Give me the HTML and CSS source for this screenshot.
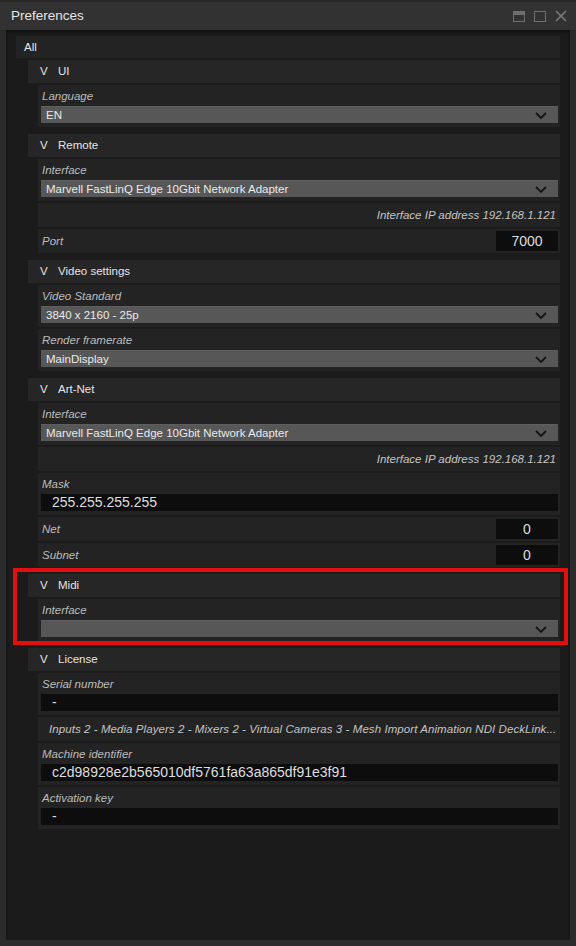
FILE: index.html
```html
<!DOCTYPE html>
<html>
<head>
<meta charset="utf-8">
<link rel="stylesheet" href="styles.css">
</head>
<body>
<div class="window">
  <div class="titlebar">
    <span class="title">Preferences</span>
    <div class="controls">
      <svg width="12" height="11" viewBox="0 0 12 11"><rect x="0.5" y="0.5" width="11" height="10" fill="none" stroke="#6f6f6f"/><rect x="1" y="1" width="10" height="3" fill="#6f6f6f"/></svg>
      <svg width="12" height="11" viewBox="0 0 12 11"><rect x="0.5" y="0.5" width="11" height="10" fill="none" stroke="#6f6f6f"/></svg>
      <svg width="12" height="12" viewBox="0 0 12 12"><path d="M1 1 L11 11 M11 1 L1 11" stroke="#7a7a7a" stroke-width="1.6"/></svg>
    </div>
  </div>
  <div class="body">
    <div class="all">All</div>
    <div class="sections">
      <section class="section">
        <div class="sec-head"><span class="chev">V</span>UI</div>
        <div class="block">
          <div class="label">Language</div>
          <div class="dropdown"><span>EN</span><svg class="arrow" width="12" height="7" viewBox="0 0 12 7"><path d="M1 1 L6 6 L11 1" fill="none" stroke="#141414" stroke-width="1.8"/></svg></div>
        </div>
      </section>

      <section class="section">
        <div class="sec-head"><span class="chev">V</span>Remote</div>
        <div class="block">
          <div class="label">Interface</div>
          <div class="dropdown"><span>Marvell FastLinQ Edge 10Gbit Network Adapter</span><svg class="arrow" width="12" height="7" viewBox="0 0 12 7"><path d="M1 1 L6 6 L11 1" fill="none" stroke="#141414" stroke-width="1.8"/></svg></div>
        </div>
        <div class="row info">Interface IP address 192.168.1.121</div>
        <div class="row field">
          <span class="label">Port</span>
          <span class="num">7000</span>
        </div>
      </section>

      <section class="section">
        <div class="sec-head"><span class="chev">V</span>Video settings</div>
        <div class="block">
          <div class="label">Video Standard</div>
          <div class="dropdown"><span>3840 x 2160 - 25p</span><svg class="arrow" width="12" height="7" viewBox="0 0 12 7"><path d="M1 1 L6 6 L11 1" fill="none" stroke="#141414" stroke-width="1.8"/></svg></div>
        </div>
        <div class="block">
          <div class="label">Render framerate</div>
          <div class="dropdown"><span>MainDisplay</span><svg class="arrow" width="12" height="7" viewBox="0 0 12 7"><path d="M1 1 L6 6 L11 1" fill="none" stroke="#141414" stroke-width="1.8"/></svg></div>
        </div>
      </section>

      <section class="section">
        <div class="sec-head"><span class="chev">V</span>Art-Net</div>
        <div class="block">
          <div class="label">Interface</div>
          <div class="dropdown"><span>Marvell FastLinQ Edge 10Gbit Network Adapter</span><svg class="arrow" width="12" height="7" viewBox="0 0 12 7"><path d="M1 1 L6 6 L11 1" fill="none" stroke="#141414" stroke-width="1.8"/></svg></div>
        </div>
        <div class="row info">Interface IP address 192.168.1.121</div>
        <div class="block">
          <div class="label">Mask</div>
          <div class="input">255.255.255.255</div>
        </div>
        <div class="row field">
          <span class="label">Net</span>
          <span class="num">0</span>
        </div>
        <div class="row field">
          <span class="label">Subnet</span>
          <span class="num">0</span>
        </div>
      </section>

      <section class="section highlighted">
        <div class="sec-head"><span class="chev">V</span>Midi</div>
        <div class="block">
          <div class="label">Interface</div>
          <div class="dropdown"><span></span><svg class="arrow" width="12" height="7" viewBox="0 0 12 7"><path d="M1 1 L6 6 L11 1" fill="none" stroke="#141414" stroke-width="1.8"/></svg></div>
        </div>
      </section>

      <section class="section">
        <div class="sec-head"><span class="chev">V</span>License</div>
        <div class="block">
          <div class="label">Serial number</div>
          <div class="input">-</div>
        </div>
        <div class="row features">Inputs 2 - Media Players 2 - Mixers 2 - Virtual Cameras 3 - Mesh Import Animation NDI DeckLink...</div>
        <div class="block">
          <div class="label">Machine identifier</div>
          <div class="input">c2d98928e2b565010df5761fa63a865df91e3f91</div>
        </div>
        <div class="block">
          <div class="label">Activation key</div>
          <div class="input">-</div>
        </div>
      </section>
    </div>
  </div>
</div>
</body>
</html>
```
FILE: styles.css
```css
* { box-sizing: border-box; }
html, body { margin: 0; padding: 0; }
body {
  background: #2b2b2b;
  font-family: "Liberation Sans", Arial, sans-serif;
  color: #e2e2e2;
}
.window {
  width: 576px;
  height: 946px;
  display: flex;
  flex-direction: column;
  background: #2b2b2b;
}
.titlebar {
  height: 30px;
  flex: none;
  display: flex;
  align-items: center;
  justify-content: space-between;
  padding: 0 9px 0 11px;
  background: #323232;
  border-top: 2px solid #262626;
}
.title {
  font-size: 13.5px;
  color: #e4e4e4;
  margin-top: -2px;
}
.controls {
  display: flex;
  align-items: center;
  gap: 9px;
}
.controls svg { display: block; }
.body {
  flex: 1;
  margin: 0 6px 6px 6px;
  background: #1b1b1b;
  padding: 6px 10px 0 10px;
  box-shadow: inset 0 2px 3px rgba(0,0,0,0.45);
}
.all {
  height: 22px;
  line-height: 22px;
  padding-left: 8px;
  background: #232323;
  font-size: 11.5px;
  color: #e6e6e6;
}
.sections {
  padding-left: 12px;
  margin-top: 2px;
  display: flex;
  flex-direction: column;
  gap: 7px;
}
.section {
  display: flex;
  flex-direction: column;
  gap: 2px;
  position: relative;
}
.sec-head {
  height: 23px;
  line-height: 23px;
  background: #262626;
  padding-left: 12px;
  font-size: 11.5px;
  color: #e4e4e4;
}
.chev {
  display: inline-block;
  width: 18px;
}
.block {
  margin-left: 10px;
  background: #232323;
  padding: 2px 2px 4px 3px;
  height: 42px;
}
.label {
  font-size: 11.5px;
  font-style: italic;
  color: #bcbcbc;
  height: 19px;
  line-height: 19px;
  padding-left: 1px;
}
.dropdown {
  height: 17px;
  background: #575757;
  border-top: 1px solid #5e5e5e;
  display: flex;
  align-items: center;
  justify-content: space-between;
  padding: 0 11px 0 5px;
  font-size: 11.5px;
  color: #eaeaea;
}
.arrow { display: block; }
.input {
  height: 17px;
  line-height: 17px;
  background: #0d0d0d;
  padding-left: 11px;
  font-size: 14px;
  color: #dedede;
}
.row {
  margin-left: 10px;
  background: #232323;
  height: 24px;
}
.info {
  line-height: 24px;
  text-align: right;
  padding-right: 4px;
  font-size: 11.5px;
  font-style: italic;
  color: #c4c4c4;
}
.field {
  display: flex;
  align-items: center;
  justify-content: space-between;
  padding: 0 2px 0 4px;
}
.field .label { padding-left: 0; }
.num {
  width: 62px;
  height: 20px;
  line-height: 20px;
  background: #0d0d0d;
  text-align: center;
  font-size: 14px;
  color: #dedede;
}
.features {
  line-height: 24px;
  padding: 0 4px 0 11px;
  font-size: 11.5px;
  font-style: italic;
  letter-spacing: 0.07px;
  color: #c4c4c4;
  white-space: nowrap;
}
.highlighted::after {
  content: "";
  position: absolute;
  left: -15px;
  right: -8px;
  top: -6px;
  bottom: -4px;
  border: 4px solid #e30f0f;
  pointer-events: none;
}
```
